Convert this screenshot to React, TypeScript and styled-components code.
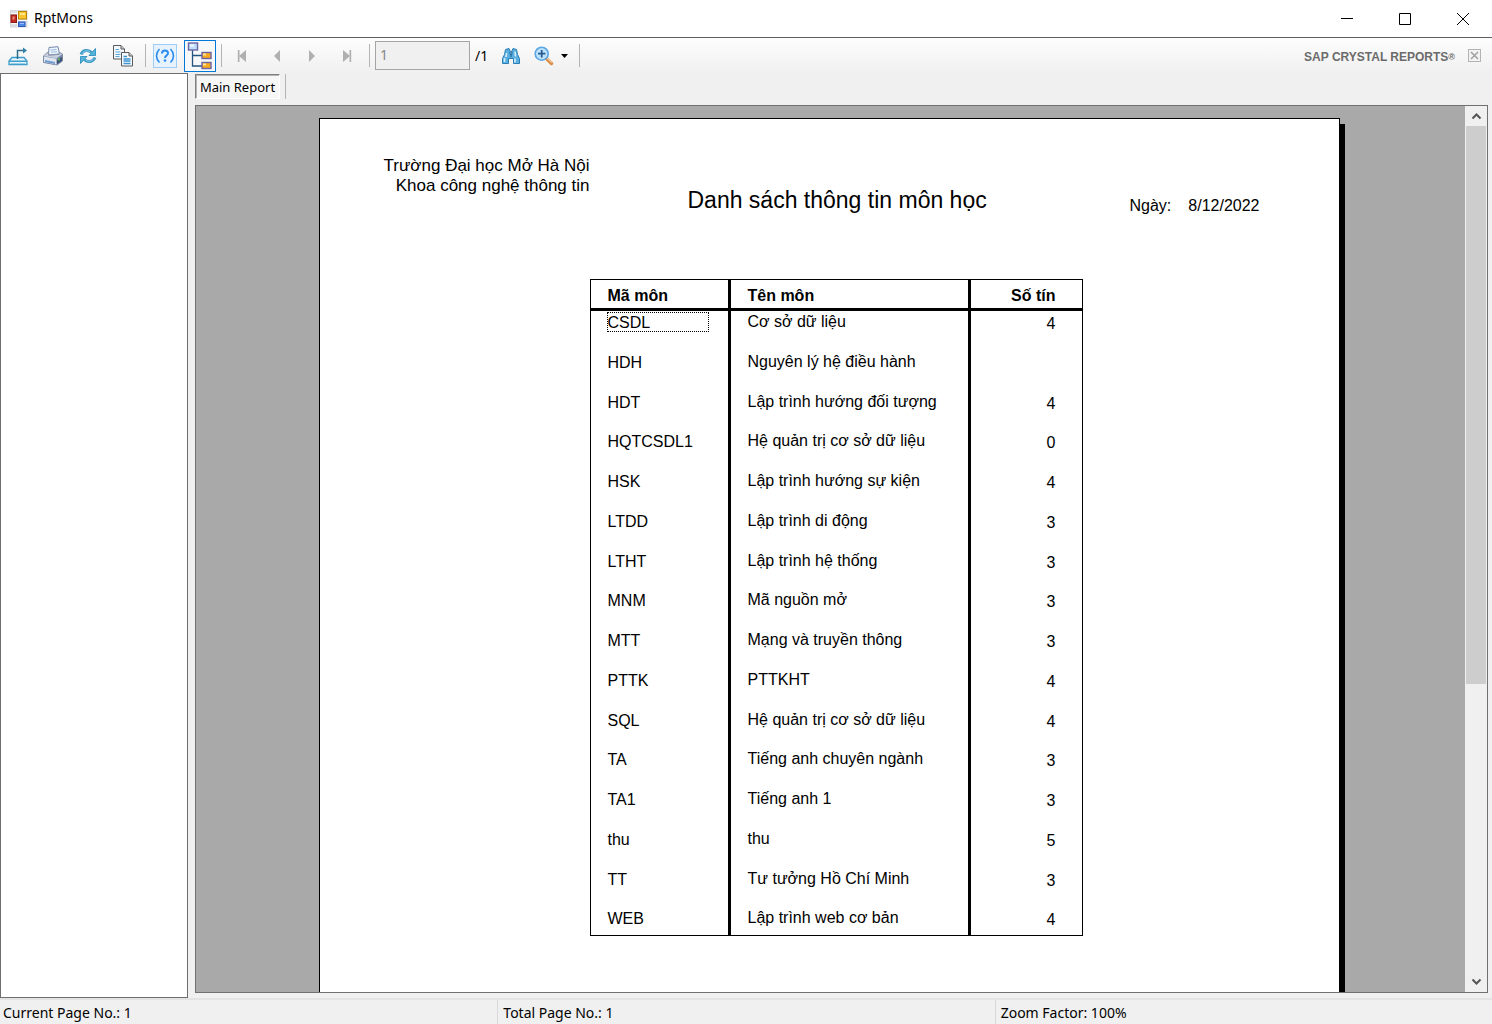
import React from "react";
import styled, { createGlobalStyle, css } from "styled-components";

const uiFont = `"Noto Sans", "Open Sans", sans-serif`;
const reportFont = `"Liberation Sans", Arial, sans-serif`;

const GlobalStyle = createGlobalStyle`
  *, *::before, *::after { box-sizing: border-box; }
  body { margin: 0; background: #f0f0f0; color: #000; font-family: ${uiFont}; }
  button, input { font: inherit; color: inherit; }
  svg { display: block; flex: none; }
`;

const Window = styled.div`
  display: flex;
  flex-direction: column;
  height: 100vh;
  overflow: hidden;
`;

const TitleBar = styled.header`
  display: flex;
  align-items: center;
  height: 38px;
  flex: none;
  padding-left: 10px;
  background: #fff;
  border-bottom: 1px solid #5e5e5e;
`;

const WindowTitle = styled.h1`
  margin: 0 auto 0 6px;
  padding-bottom: 2px;
  font-size: 14px;
  line-height: 20px;
  font-weight: 400;
`;

const CaptionButton = styled.button`
  display: grid;
  place-items: center;
  width: 58px;
  height: 37px;
  padding: 0;
  border: 0;
  background: transparent;
`;

const Toolbar = styled.div`
  display: flex;
  align-items: center;
  flex: none;
  height: 35px;
  background: linear-gradient(#fdfdfd, #f0f0f0);
`;

const ToolButton = styled.button<{ $kind?: "help" | "toggle" | "menu" }>`
  display: flex;
  align-items: center;
  justify-content: center;
  width: 35px;
  height: 32px;
  padding: 0;
  border: 0;
  background: transparent;
  color: #b0b0b0;
  ${(p) => p.$kind === "help" && css`
    width: 24px;
    height: 24px;
    margin: 0 7px 0 2px;
    border: 1px solid #9ccdf6;
    background: #e6f3fe;
  `}
  ${(p) => p.$kind === "toggle" && css`
    width: 32px;
    border: 1px solid #0078d7;
    background: #f6f8fa;
  `}
  ${(p) => p.$kind === "menu" && css`
    gap: 7px;
    width: 46px;
  `}
`;

const Separator = styled.span<{ $tall?: boolean; $tight?: boolean }>`
  flex: none;
  width: 1px;
  height: ${(p) => (p.$tall ? 25 : 23)}px;
  margin: 0 ${(p) => (p.$tight ? 2 : 5)}px 0 5px;
  background: #b4b4b4;
`;

const PageInput = styled.input`
  width: 95px;
  height: 29px;
  padding: 0 4px 2px;
  border: 1px solid #a5a5a5;
  border-radius: 0;
  background: #f0f0f0;
  color: #858585;
  font-size: 14px;
`;

const PageTotal = styled.span`
  margin: 0 5px;
  font-size: 14px;
  line-height: 20px;
`;

const Brand = styled.span`
  display: flex;
  align-items: center;
  margin-left: auto;
  padding-top: 3px;
  color: #6b6b6b;
  font: 700 12px/16px ${reportFont};
`;

const Registered = styled.span`
  font-size: 9px;
`;

const CloseView = styled.button`
  display: grid;
  place-items: center;
  margin: 0 11px 0 13px;
  width: 13px;
  height: 13px;
  padding: 0;
  border: 1px solid #b4b4b4;
  background: #f3f3f3;
`;

const Workspace = styled.div`
  display: flex;
  flex: 1;
  min-height: 0;
`;

const GroupTree = styled.aside`
  flex: none;
  width: 188px;
  background: #fff;
  border: 1px solid #6e6e6e;
`;

const Viewer = styled.main`
  display: flex;
  flex-direction: column;
  flex: 1;
  min-width: 0;
  padding: 0 4px 5px 7px;
`;

const TabStrip = styled.div`
  display: flex;
  flex: none;
  align-items: flex-start;
  height: 32px;
  padding-top: 1px;
`;

const Tab = styled.button`
  width: 85px;
  height: 25px;
  padding: 0;
  border: 1px solid;
  border-color: #808080 #fff #fff #808080;
  box-shadow: inset 1px 1px 0 #b4b4b4;
  background: #f7f7f7;
  font-size: 13px;
  line-height: 20px;
`;

const Canvas = styled.div`
  display: flex;
  flex: 1;
  min-height: 0;
  border: 1px solid #707070;
  background: #a9a9a9;
`;

const PageArea = styled.div`
  display: flex;
  justify-content: center;
  flex: 1;
  min-width: 0;
  padding: 12px 3px 0 0;
  overflow: hidden;
`;

const Sheet = styled.article`
  flex: none;
  width: 1021px;
  height: 1320px;
  padding-top: 37px;
  border: 1px solid #000;
  background: #fff;
  box-shadow: 5px 6px 0 #000;
  font: 16px/20px ${reportFont};
`;

const ReportHeader = styled.header`
  display: flex;
  height: 123px;
  padding-right: 79px;
`;

const Organisation = styled.address`
  width: 270px;
  font-size: 17px;
  font-style: normal;
  text-align: right;
`;

const ReportTitle = styled.h2`
  margin: 30px auto 0 98px;
  font-size: 23px;
  line-height: 28px;
  font-weight: 400;
`;

const ReportDate = styled.p`
  display: flex;
  gap: 17px;
  margin: 40px 0 0;
`;

const SubjectTable = styled.table`
  width: 493px;
  height: 657px;
  margin-left: 270px;
  border: 1px solid #000;
  border-collapse: separate;
  border-spacing: 0;
  table-layout: fixed;
`;

const HeadCell = styled.th<{ $number?: boolean }>`
  height: 31px;
  padding: ${(p) => (p.$number ? "4px 26px 0 0" : "4px 0 0 17px")};
  border-bottom: 3px solid #000;
  border-right: ${(p) => (p.$number ? "0" : "3px solid #000")};
  text-align: ${(p) => (p.$number ? "right" : "left")};
  font-weight: 700;
`;

const Row = styled.tr`
  height: 39px;
  &:last-child { height: 27px; }
`;

const Cell = styled.td<{ $number?: boolean }>`
  padding: ${(p) => (p.$number ? "3px 26px 0 0" : "1px 0 0 17px")};
  border-right: ${(p) => (p.$number ? "0" : "3px solid #000")};
  text-align: ${(p) => (p.$number ? "right" : "left")};
  vertical-align: top;
  white-space: nowrap;
`;

const Code = styled.div<{ $selected: boolean }>`
  width: 100px;
  height: 18px;
  margin-top: 1px;
  line-height: 20px;
  outline: ${(p) => (p.$selected ? "1px dotted #000" : "none")};
`;

const ScrollBar = styled.div`
  display: flex;
  flex-direction: column;
  flex: none;
  width: 22px;
  background: #f0f0f0;
`;

const ScrollButton = styled.button`
  display: grid;
  place-items: center;
  height: 20px;
  padding: 0;
  border: 0;
  background: #f0f0f0;
`;

const ScrollTrack = styled.div`
  flex: 1;
  padding: 0 1px;
`;

const ScrollThumb = styled.div`
  height: 66%;
  background: #cdcdcd;
`;

const StatusBar = styled.footer`
  display: grid;
  grid-template-columns: repeat(3, 1fr);
  flex: none;
  height: 26px;
  border-top: 2px solid #e3e3e3;
`;

const StatusItem = styled.span`
  padding: 3px;
  font-size: 14px;
  line-height: 20px;
  & + & {
    padding-left: 5px;
    border-left: 1px solid #d9d9d9;
  }
`;

const AppIcon = () => (
  <svg width="18" height="18" viewBox="0 0 18 18">
    <rect x="0.5" y="0.5" width="16.5" height="16.5" fill="#dcdfe4" stroke="#d3d6db" />
    <path d="M7.500 1v16M1 3.500h6M1 13.500h6M8 10.500h9" stroke="#f6f7f9" />
    <rect x="1" y="5" width="5.500" height="7.500" fill="#c32c20" stroke="#8f1a14" />
    <rect x="2.5" y="6.5" width="2" height="3" fill="#ef8a78" />
    <rect x="8.5" y="1.500" width="8" height="7.500" fill="#fbc62d" stroke="#b98505" />
    <path d="M10 3h5v2h-5z" fill="#fee48c" />
    <rect x="8.500" y="12" width="6.500" height="4.500" fill="#4f87e6" stroke="#2b58b8" />
    <path d="M10 13h4v1h-4z" fill="#9cc0fb" />
  </svg>
);

const ExportIcon = () => (
  <svg width="22" height="20" viewBox="0 0 22 20" fill="none">
    <path d="M5 11.5h12l3 3.5v3.5H2V15z" fill="#e4f5fd" stroke="#3d9ccc" strokeWidth="1.3" />
    <path d="M2 15.3h18M4 18.4h14" stroke="#3d9ccc" strokeWidth="1.4" />
    <path d="M10.5 13V4.5H17" stroke="#2f6f8c" strokeWidth="1.5" />
    <path d="M16 1.5l4 3-4 3z" fill="#2f7fa6" />
  </svg>
);

const PrintIcon = () => (
  <svg width="22" height="20" viewBox="0 0 22 20">
    <path d="M7 1.500l9-.8 1.500 7.300-11 1z" fill="#eef6ff" stroke="#7486a8" />
    <path d="M8.500 4l6-.5M9 6.200l6-.5" stroke="#9cb8dc" />
    <path d="M1.500 10L5 6.500h1.200l.5 2.800 10.500-1 .2-2L20.500 8v7L15 19 1.500 16.500z" fill="#c7d0de" stroke="#8794ab" />
    <path d="M1.500 10l13 2.500 6-4.500v7L15 19 1.500 16.500z" fill="#7383a0" />
    <path d="M2 10.500l12.500 2.200v5.800L2 16z" fill="#dfe6f0" />
    <path d="M3 14l10 2v2L3 16z" fill="#6f9bd0" />
    <path d="M15 14.500l5-3.500v3.500L15 18z" fill="#3a4f79" />
    <rect x="16" y="12.500" width="2" height="2" fill="#54b34c" />
  </svg>
);

const RefreshIcon = () => (
  <svg width="18" height="18" viewBox="0 0 18 18" fill="none">
    <path d="M2 7.500C4 3 9 2 12.700 5.500" stroke="#3b98c6" strokeWidth="3" />
    <path d="M3 6.500C5 3.500 8.500 3 11.500 5" stroke="#8fd2ef" strokeWidth="1" />
    <path d="M16.500 1.500v7H10z" fill="#55b4da" stroke="#3b98c6" />
    <path d="M16 10.500C14 15 9 16 5.300 12.500" stroke="#3b98c6" strokeWidth="3" />
    <path d="M15 11.500c-2 3-5.500 3.500-8.500 1.500" stroke="#8fd2ef" strokeWidth="1" />
    <path d="M1.500 16.500v-7H8z" fill="#55b4da" stroke="#3b98c6" />
  </svg>
);

const CopyIcon = () => (
  <svg width="22" height="22" viewBox="0 0 22 22">
    <path d="M1.500 .5H9L12.500 4v10h-11z" fill="#f4f8fd" stroke="#5b5b5b" />
    <path d="M9 .5V4h3.500" fill="#c6cbd1" stroke="#5b5b5b" />
    <path d="M3.500 4.500H7M3.500 7h5M3.500 9.500h5M3.500 11.500h4" stroke="#5aa9dc" />
    <path d="M9.500 7.500H17l3.500 3.500v10h-11z" fill="#f4f8fd" stroke="#5b5b5b" />
    <path d="M17 7.500V11h3.500" fill="#c6cbd1" stroke="#5b5b5b" />
    <path d="M11.500 11.500H15M11.500 14h7M11.500 16h7M11.500 18.500h7" stroke="#3c94d1" strokeWidth="1.300" />
  </svg>
);

const HelpIcon = () => (
  <svg width="20" height="20" viewBox="0 0 20 20" fill="none" stroke="#2b8ced">
    <path d="M4.500 3C.5 7 .5 12.500 4.500 16.500M15.500 3c4 4 4 9.500 0 13.500" strokeWidth="1.600" />
    <path d="M7 7.500C7 3.500 13 3.500 13 7.200c0 2.300-3 2.300-3 4.800" strokeWidth="2" />
    <circle cx="10" cy="14.500" r="1.300" fill="#2b8ced" stroke="none" />
  </svg>
);

const TreeIcon = () => (
  <svg width="26" height="28" viewBox="0 0 26 28">
    <path d="M5.500 8v16H15M5.500 13.500H15" fill="none" stroke="#27547f" strokeWidth="1.300" />
    <rect x="1.500" y="1" width="9" height="7" fill="#c0dffb" stroke="#6c65a3" strokeWidth="1.400" />
    <path d="M3 2.500h4v2H3z" fill="#f2faff" />
    <rect x="15" y="10.500" width="9" height="6" fill="#f9a91e" stroke="#6c65a3" strokeWidth="1.400" />
    <path d="M16 11.500h3v2h-3z" fill="#ffe39a" />
    <rect x="15" y="20.500" width="9" height="6" fill="#f9a91e" stroke="#6c65a3" strokeWidth="1.400" />
    <path d="M16 21.500h3v2h-3z" fill="#ffe39a" />
  </svg>
);

const NavIcon = ({ back, end }: { back?: boolean; end?: boolean }) => (
  <svg width="12" height="14" viewBox="0 0 12 14" fill="currentColor">
    <g transform={back ? "translate(12 0) scale(-1 1)" : undefined}>
      <path d={end ? "M2 1l7 6-7 6z" : "M3 1l6 6-6 6z"} />
      {end && <path d="M8.500 1h1.700v12H8.500z" />}
    </g>
  </svg>
);

const BinocularsIcon = () => (
  <svg width="20" height="18" viewBox="0 0 20 18" stroke="#2a7fb5">
    <path d="M4.500 2.500L8 1.500l1 2v4h2v-4l1-2 3.500 1 1 5 2 4V16.500h-6v-5h-5v5h-6V11.500l2-4z" fill="#5aaee0" />
    <path d="M3.500 11v4M5.500 6l-.5 4M14 11.500v4M14 4.500l.5 5" stroke="#d4effc" strokeWidth="1.600" />
    <path d="M10 4v6" stroke="#246f9f" strokeWidth="1.300" />
  </svg>
);

const ZoomIcon = () => (
  <svg width="20" height="20" viewBox="0 0 20 20">
    <path d="M12 12l5.500 5.500" stroke="#d88b48" strokeWidth="3.400" strokeLinecap="round" />
    <path d="M12.500 11.500l5.500 5" stroke="#f8cc99" strokeWidth="1.200" />
    <circle cx="7.700" cy="7.700" r="6.500" fill="#bde2fb" stroke="#5aa5e4" strokeWidth="1.600" />
    <path d="M7.700 4v7.400M4 7.700h7.400" stroke="#285b91" strokeWidth="1.800" />
  </svg>
);

const Chevron = ({ down }: { down?: boolean }) => (
  <svg width="11" height="8" viewBox="0 0 11 8" fill="none">
    <path d={down ? "M1.500 1.500l4 4 4-4" : "M1.500 6.500l4-4 4 4"} stroke="#555" strokeWidth="2" />
  </svg>
);

const subjects: [string, string, string][] = [
  ["CSDL", "Cơ sở dữ liệu", "4"],
  ["HDH", "Nguyên lý hệ điều hành", ""],
  ["HDT", "Lập trình hướng đối tượng", "4"],
  ["HQTCSDL1", "Hệ quản trị cơ sở dữ liệu", "0"],
  ["HSK", "Lập trình hướng sự kiện", "4"],
  ["LTDD", "Lập trình di động", "3"],
  ["LTHT", "Lập trình hệ thống", "3"],
  ["MNM", "Mã nguồn mở", "3"],
  ["MTT", "Mạng và truyền thông", "3"],
  ["PTTK", "PTTKHT", "4"],
  ["SQL", "Hệ quản trị cơ sở dữ liệu", "4"],
  ["TA", "Tiếng anh chuyên ngành", "3"],
  ["TA1", "Tiếng anh 1", "3"],
  ["thu", "thu", "5"],
  ["TT", "Tư tưởng Hồ Chí Minh", "3"],
  ["WEB", "Lập trình web cơ bản", "4"],
];

export default function App() {
  return (
    <Window>
      <GlobalStyle />
      <TitleBar>
        <AppIcon />
        <WindowTitle>RptMons</WindowTitle>
        <CaptionButton aria-label="Minimize">
          <svg width="12" height="12" stroke="#000"><path d="M0 5.500h12" /></svg>
        </CaptionButton>
        <CaptionButton aria-label="Maximize">
          <svg width="12" height="12" stroke="#000" fill="none"><path d="M.5.500h11v11H.5z" /></svg>
        </CaptionButton>
        <CaptionButton aria-label="Close">
          <svg width="12" height="12" stroke="#000"><path d="M0 0l12 12M12 0L0 12" /></svg>
        </CaptionButton>
      </TitleBar>

      <Toolbar role="toolbar">
        <ToolButton aria-label="Export report"><ExportIcon /></ToolButton>
        <ToolButton aria-label="Print report"><PrintIcon /></ToolButton>
        <ToolButton aria-label="Refresh"><RefreshIcon /></ToolButton>
        <ToolButton aria-label="Copy"><CopyIcon /></ToolButton>
        <Separator />
        <ToolButton $kind="help" aria-label="Help"><HelpIcon /></ToolButton>
        <ToolButton $kind="toggle" aria-label="Toggle group tree" aria-pressed="true"><TreeIcon /></ToolButton>
        <Separator $tight />
        <ToolButton disabled aria-label="First page"><NavIcon back end /></ToolButton>
        <ToolButton disabled aria-label="Previous page"><NavIcon back /></ToolButton>
        <ToolButton disabled aria-label="Next page"><NavIcon /></ToolButton>
        <ToolButton disabled aria-label="Last page"><NavIcon end /></ToolButton>
        <Separator />
        <PageInput aria-label="Page number" defaultValue="1" disabled />
        <PageTotal>/1</PageTotal>
        <ToolButton aria-label="Find text"><BinocularsIcon /></ToolButton>
        <ToolButton $kind="menu" aria-label="Zoom">
          <ZoomIcon />
          <svg width="7" height="4"><path d="M0 0h7L3.500 4z" fill="#000" /></svg>
        </ToolButton>
        <Separator />
        <Brand>SAP CRYSTAL REPORTS<Registered>®</Registered></Brand>
        <CloseView aria-label="Close view">
          <svg width="9" height="9" stroke="#a0a0a0" strokeWidth="1.500"><path d="M1 1l7 7M8 1L1 8" /></svg>
        </CloseView>
      </Toolbar>

      <Workspace>
        <GroupTree aria-label="Group tree" />
        <Viewer>
          <TabStrip>
            <Tab>Main Report</Tab>
            <Separator $tall />
          </TabStrip>
          <Canvas>
            <PageArea>
              <Sheet>
                <ReportHeader>
                  <Organisation>
                    Trường Đại học Mở Hà Nội
                    <br />
                    Khoa công nghệ thông tin
                  </Organisation>
                  <ReportTitle>Danh sách thông tin môn học</ReportTitle>
                  <ReportDate>
                    <span>Ngày:</span>
                    <time dateTime="2022-12-08">8/12/2022</time>
                  </ReportDate>
                </ReportHeader>
                <SubjectTable>
                  <colgroup>
                    <col style={{ width: 140 }} />
                    <col style={{ width: 240 }} />
                    <col />
                  </colgroup>
                  <thead>
                    <tr>
                      <HeadCell scope="col">Mã môn</HeadCell>
                      <HeadCell scope="col">Tên môn</HeadCell>
                      <HeadCell scope="col" $number>Số tín</HeadCell>
                    </tr>
                  </thead>
                  <tbody>
                    {subjects.map(([code, name, credits], i) => (
                      <Row key={code}>
                        <Cell><Code $selected={i === 0}>{code}</Code></Cell>
                        <Cell>{name}</Cell>
                        <Cell $number>{credits}</Cell>
                      </Row>
                    ))}
                  </tbody>
                </SubjectTable>
              </Sheet>
            </PageArea>
            <ScrollBar>
              <ScrollButton aria-label="Scroll up"><Chevron /></ScrollButton>
              <ScrollTrack><ScrollThumb /></ScrollTrack>
              <ScrollButton aria-label="Scroll down"><Chevron down /></ScrollButton>
            </ScrollBar>
          </Canvas>
        </Viewer>
      </Workspace>

      <StatusBar>
        <StatusItem>Current Page No.: 1</StatusItem>
        <StatusItem>Total Page No.: 1</StatusItem>
        <StatusItem>Zoom Factor: 100%</StatusItem>
      </StatusBar>
    </Window>
  );
}
